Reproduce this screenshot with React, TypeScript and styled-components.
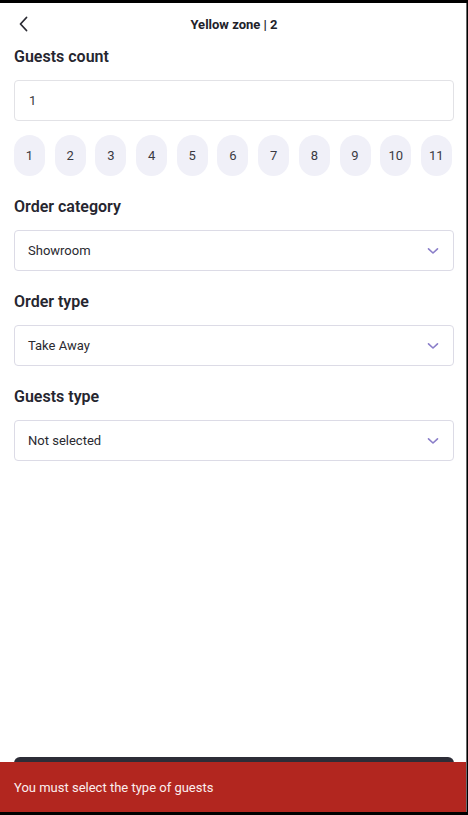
import React from "react";
import styled, { createGlobalStyle } from "styled-components";

const Global = createGlobalStyle`
  html, body { margin: 0; padding: 0; background: #000; }
  body { font-family: Roboto, "Noto Sans", Arial, sans-serif; }
  * { box-sizing: border-box; }
`;

const Screen = styled.div`
  position: relative;
  margin-top: 3px;
  width: 467px;
  height: 809px;
  background: #fff;
  display: flex;
  flex-direction: column;
  overflow: hidden;
  border-right: 1px solid #6a6a6a;
`;

const Header = styled.header`
  position: relative;
  height: 43px;
  display: flex;
  align-items: center;
  justify-content: center;
`;

const BackButton = styled.button`
  position: absolute;
  left: 12px;
  top: 9px;
  width: 24px;
  height: 24px;
  border: 0;
  background: none;
  padding: 0;
  display: flex;
  align-items: center;
  justify-content: center;
  color: #2b2b33;
`;

const Title = styled.h1`
  margin: 0 0 1px 2px;
  font-size: 13px;
  font-weight: 700;
  color: #22222a;
`;

const Content = styled.main`
  flex: 1;
  padding: 1px 12px 0 14px;
  display: flex;
  flex-direction: column;
  gap: 21px;
`;

const Section = styled.section`
  display: flex;
  flex-direction: column;
`;

const Label = styled.h2`
  margin: 0 0 13px;
  font-size: 16px;
  line-height: 20px;
  font-weight: 600;
  color: #26262f;
`;

const TextBox = styled.div`
  height: 41px;
  border: 1px solid #e2e2e6;
  border-radius: 4px;
  display: flex;
  align-items: center;
  padding: 0 14px;
  font-size: 13px;
  color: #3a3a40;
`;

const Chips = styled.div`
  margin-top: 14px;
  display: flex;
  justify-content: space-between;
  padding-right: 2px;
`;

const Chip = styled.button`
  width: 31px;
  height: 41px;
  border: 0;
  border-radius: 16px;
  background: #f0f0f8;
  font-family: inherit;
  font-size: 13px;
  color: #3a3a42;
  padding: 0;
  display: flex;
  align-items: center;
  justify-content: center;
`;

const Select = styled.div`
  height: 41px;
  border: 1px solid #dcdbe6;
  border-radius: 4px;
  display: flex;
  align-items: center;
  justify-content: space-between;
  padding: 0 14px 0 13px;
  font-size: 13px;
  color: #2a2a30;
`;

const Footer = styled.footer`
  padding: 0 12px 0 14px;
  height: 55px;
  display: flex;
  align-items: flex-start;
`;

const SubmitButton = styled.button`
  width: 100%;
  height: 48px;
  border: 0;
  border-radius: 6px;
  background: #2d2d37;
  color: #fff;
  font-family: inherit;
  font-size: 14px;
`;

const Toast = styled.div`
  position: absolute;
  left: 0;
  right: 0;
  bottom: 0;
  height: 50px;
  background: #b2261f;
  color: #fbeeee;
  font-size: 13px;
  display: flex;
  align-items: center;
  padding: 0 14px;
`;

const Chevron = () => (
  <svg width="12" height="8" viewBox="0 0 12 8" fill="none">
    <path d="M1.5 1.8 L6 6 L10.5 1.8" stroke="#8a7ec9" strokeWidth="1.6" strokeLinecap="round" strokeLinejoin="round" />
  </svg>
);

const BackIcon = () => (
  <svg width="12" height="16" viewBox="0 0 12 16" fill="none">
    <path d="M8.5 1.5 L2.5 8 L8.5 14.5" stroke="#2b2b33" strokeWidth="1.8" strokeLinecap="round" strokeLinejoin="round" />
  </svg>
);

const counts = [1, 2, 3, 4, 5, 6, 7, 8, 9, 10, 11];

const selects = [
  { label: "Order category", value: "Showroom" },
  { label: "Order type", value: "Take Away" },
  { label: "Guests type", value: "Not selected" },
];

export default function App() {
  return (
    <>
      <Global />
      <Screen>
        <Header>
          <BackButton aria-label="Back">
            <BackIcon />
          </BackButton>
          <Title>Yellow zone | 2</Title>
        </Header>
        <Content>
          <Section>
            <Label>Guests count</Label>
            <TextBox>1</TextBox>
            <Chips>
              {counts.map((n) => (
                <Chip key={n}>{n}</Chip>
              ))}
            </Chips>
          </Section>
          {selects.map((s) => (
            <Section key={s.label}>
              <Label>{s.label}</Label>
              <Select>
                <span>{s.value}</span>
                <Chevron />
              </Select>
            </Section>
          ))}
        </Content>
        <Footer>
          <SubmitButton>Save</SubmitButton>
        </Footer>
        <Toast>You must select the type of guests</Toast>
      </Screen>
    </>
  );
}
